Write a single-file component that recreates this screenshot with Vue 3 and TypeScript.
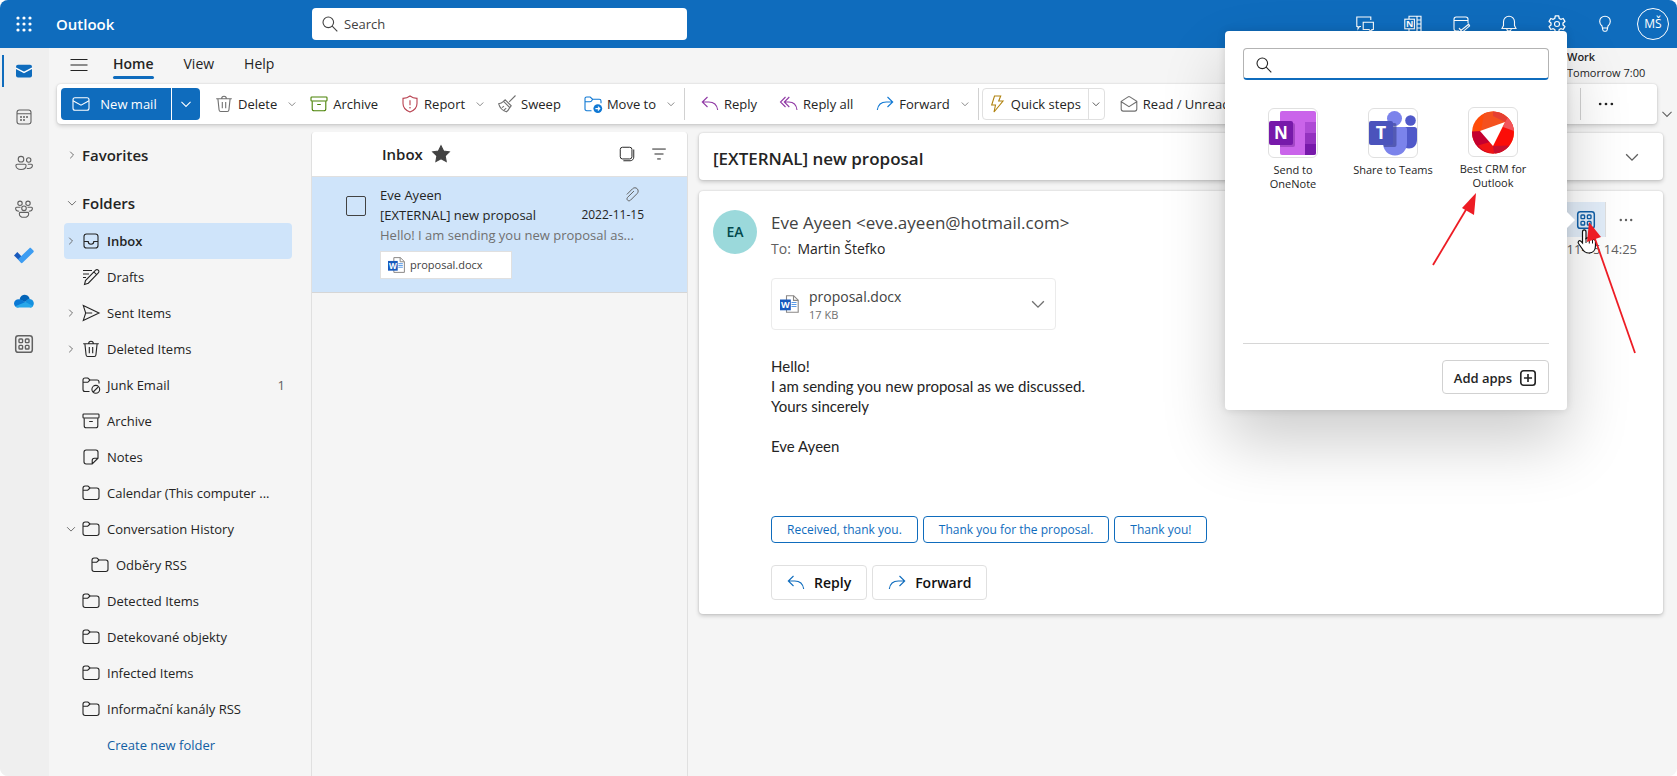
<script setup lang="ts">
import { h, ref } from 'vue'
import type { FunctionalComponent } from 'vue'

interface Folder {
  label: string
  icon: string
  chevron?: 'right' | 'down'
  count?: number
  selected?: boolean
  nested?: boolean
}

interface ToolbarAction {
  label: string
  icon: string
  tone: string
  menu?: boolean
}

const glyphs: Record<string, string> = {
  launcher:
    '<g fill="currentColor" stroke="none"><circle cx="4" cy="4" r="1.6"/><circle cx="10" cy="4" r="1.6"/><circle cx="16" cy="4" r="1.6"/><circle cx="4" cy="10" r="1.6"/><circle cx="10" cy="10" r="1.6"/><circle cx="16" cy="10" r="1.6"/><circle cx="4" cy="16" r="1.6"/><circle cx="10" cy="16" r="1.6"/><circle cx="16" cy="16" r="1.6"/></g>',
  search: '<circle cx="8.3" cy="8.3" r="5.3"/><path d="M12.2 12.2 17.3 17.3"/>',
  menu: '<path d="M1.5 4.5h17M1.5 10h17M1.5 15.5h17"/>',
  mail: '<rect x="2" y="3.8" width="16" height="12.4" rx="2"/><path d="m2 6.8 8 4.4 8-4.4"/>',
  mailFilled:
    '<rect x="2" y="3.8" width="16" height="12.6" rx="2" fill="currentColor" stroke="none"/><path d="m1.8 7.2 8.2 4.2 8.2-4.2" stroke="#fff" stroke-width="1.3"/>',
  calendar:
    '<rect x="3" y="3" width="14" height="14" rx="2.4"/><path d="M3 6.7h14"/><g fill="currentColor" stroke="none"><circle cx="7" cy="10" r="1"/><circle cx="10" cy="10" r="1"/><circle cx="13" cy="10" r="1"/><circle cx="7" cy="13" r="1"/><circle cx="10" cy="13" r="1"/></g>',
  people:
    '<circle cx="7" cy="6.2" r="2.8"/><circle cx="14.7" cy="7" r="2.2"/><path d="M3.2 11.3h7.6c.8 0 1.3.5 1.3 1.2 0 2.4-2 4-5.1 4s-5.1-1.6-5.1-4c0-.7.5-1.2 1.3-1.2ZM13.8 11.3h3.6c.6 0 1 .4 1 1 0 2-1.600 3.200-3.900 3.200-.6 0-1.200-.1-1.700-.3"/>',
  groups:
    '<circle cx="6" cy="4.300" r="2.200"/><circle cx="14" cy="4.300" r="2.200"/><circle cx="10" cy="9.300" r="2.300"/><path d="M6.500 8.300H2.600c-.6 0-1 .4-1 1 0 1.800 1.400 3 3.600 3M13.500 8.300h3.900c.6 0 1 .4 1 1 0 1.800-1.400 3-3.600 3M6.300 13.400h7.400c.6 0 1 .4 1 1 0 2.300-1.800 3.900-4.700 3.900s-4.700-1.600-4.700-3.900c0-.6.400-1 1-1Z"/>',
  todo:
    '<path d="m0 10.400 3.300-3.300 6.600 6.600-2.700 3.800z" fill="#185abd" stroke="none"/><path d="m4 14.200 11.400-11c.5-.5 1.200-.5 1.700 0l2.300 2.300c.5.500.5 1.200 0 1.700L8.500 17.800c-.5.5-1.100.5-1.600 0z" fill="#3d9df2" stroke="none"/>',
  cloud:
    '<path d="M5.500 8.500C6.400 5 9 3.600 11.500 3.900c2 .2 3.500 1.500 4.200 3.600L11 11z" fill="#0364b8" stroke="none"/><path d="M4 16.500c-2.400 0-4-1.700-4-4 0-2.500 2-4.300 4.700-4.300 1.300 0 2.400.4 3.500 1l5 3z" fill="#0a78d4" stroke="none"/><path d="m10 12 3-3c1-1.500 5.700-1.600 6.700 2.500.5 2.700-1 5-3.400 5z" fill="#1490df" stroke="none"/><path d="M1.300 15.200 11.500 10.900l7.400 4.100c-.7 1-1.600 1.500-2.800 1.500H4c-1.100 0-2-.5-2.700-1.300z" fill="#28a8ea" stroke="none"/>',
  apps:
    '<rect x="1.700" y="1.700" width="16.600" height="16.600" rx="2.600" stroke-width="1.500"/><g stroke-width="1.400"><rect x="5" y="5" width="3.600" height="3.600" rx=".8"/><rect x="11.400" y="5" width="3.600" height="3.600" rx=".8"/><rect x="5" y="11.400" width="3.600" height="3.600" rx=".8"/><rect x="11.400" y="11.400" width="3.600" height="3.600" rx=".8"/></g>',
  trash:
    '<path d="M2.200 4.700h15.600M7.700 4.500a2.300 2.300 0 0 1 4.600 0M3.900 4.900 5.100 16c.1.900.8 1.500 1.600 1.500h6.600c.8 0 1.500-.6 1.600-1.500L16.100 4.900M8.300 8v6.300M11.700 8v6.300"/>',
  archive:
    '<rect x="2" y="3" width="16" height="4" rx=".8"/><path d="M3.200 7.200v7.500c0 1.300.8 2.100 2.100 2.100h9.400c1.300 0 2.100-.8 2.100-2.100V7.200M8.200 10.500h3.600"/>',
  report:
    '<path d="M10 2c2.100 1.600 4.300 2.300 7 2.400v5.200c0 4-2.500 6.900-7 8.500-4.500-1.600-7-4.500-7-8.500V4.400c2.700-.1 4.900-.8 7-2.400ZM10 6.300v5"/><circle cx="10" cy="13.700" r=".8" fill="currentColor" stroke="none"/>',
  sweep:
    '<path d="m18.500 1.500-6.300 6.300M8.200 5.800l6 6-1.400 1.800-6.300-6.300zM6.500 7.300C5 8.800 3.500 9.500 1.700 9.800c1 3.800 3.700 6.700 7.700 8 1.600-1.200 2.600-2.600 3.400-4.200M5 13.600l2-1.500M7 16.200l2.200-2"/>',
  move:
    '<path d="M8.500 16.700H3.700c-1 0-1.700-.7-1.700-1.700V4.700C2 3.700 2.700 3 3.700 3h3.500l2.300 2.200h6.800c1 0 1.700.7 1.700 1.700v2.300M2 7.700h5c.7 0 1-.2 1.400-.6l1.300-1.800"/><circle cx="14.800" cy="14.600" r="4.400" fill="#0f78d4" stroke="none"/><path d="M12.400 14.600h4.400m-1.900-1.900 1.900 1.900-1.900 1.900" stroke="#fff"/>',
  reply: '<path d="M7.500 3 2.300 8l5.200 5M2.300 8h6.400c5 0 8.300 3 9 8"/>',
  replyAll: '<path d="M6.500 3 1.500 8l5 5M10.300 3l-5 5 5 5M5.300 8h4.500c4.600 0 7.600 2.900 8.200 8"/>',
  forward: '<path d="m12.500 3 5.200 5-5.200 5M17.700 8h-6.400c-5 0-8.300 3-9 8"/>',
  bolt: '<path d="M7.500 2h6.200l-2 5H16L7 18l1.500-7H4.700z"/>',
  openMail:
    '<path d="m2.200 7.400 6.900-4.500c.6-.4 1.200-.4 1.800 0l6.900 4.500v7.700c0 1.200-.8 2-2 2H4.200c-1.200 0-2-.8-2-2zM2.300 7.700l7.700 5 7.700-5"/>',
  inbox:
    '<rect x="3" y="3" width="14" height="14" rx="2.600"/><path d="M3 10.500h4.200c0 1.600 1.200 2.700 2.800 2.700s2.800-1.100 2.800-2.700H17"/>',
  drafts:
    '<path d="m3.500 17.500 1-4L14.600 3.200c.8-.8 2-.8 2.700 0 .8.700.8 1.900 0 2.700L7.300 16.200zM13 5l2.500 2.700M2 3.500h9M2 7h6M2 10.500h3"/>',
  send: '<path d="M2.300 2.600 18 10 2.300 17.400 4.700 10zM4.700 10h6.500"/>',
  junk:
    '<path d="M8.500 16.500H4c-1.200 0-2-.8-2-2v-9.500c0-1.200.8-2 2-2h2.800l2.200 2h7c1.200 0 2 .8 2 2v1.500M2 7.300h4.800L9 5"/><circle cx="14.800" cy="14.300" r="3.900"/><path d="m12.200 17 5.300-5.300"/>',
  note:
    '<path d="M5.200 3h9.600C16.100 3 17 3.900 17 5.200v6L11.200 17h-6C3.900 17 3 16.100 3 14.800V5.200C3 3.900 3.900 3 5.200 3ZM17 11.200h-3.600c-1.300 0-2.200.9-2.200 2.200V17"/>',
  folder:
    '<path d="M4.200 3h2.700l2.200 2h6.700c1.300 0 2.200.9 2.200 2.200v7.100c0 1.300-.9 2.200-2.200 2.200H4.200C2.900 16.500 2 15.600 2 14.300V5.200C2 3.900 2.900 3 4.200 3ZM2 7.200h4.700L9.100 5"/>',
  right: '<path d="m7 4.500 5.500 5.500L7 15.500" stroke-width="1.500"/>',
  down: '<path d="m3.500 7 6.500 6.500L16.500 7" stroke-width="1.500"/>',
  star: '<path d="m10 1.800 2.600 5.200 5.700.8-4.100 4 1 5.700-5.200-2.700-5.100 2.700 1-5.700-4.200-4 5.700-.8z" fill="currentColor"/>',
  select: '<rect x="2.500" y="2.500" width="13" height="13" rx="2.500"/><path d="M17.500 5v8.500c0 2.300-1.700 4-4 4H6"/>',
  filter: '<path d="M2.500 4.500h15M5 10h10M8 15.500h4"/>',
  clip: '<path d="m3.300 9.500 6.300-6.300c1.500-1.500 3.800-1.500 5.200 0s1.400 3.700 0 5.200l-7.500 7.500c-.9.900-2.300.9-3.200 0s-.9-2.300 0-3.200L11.200 5.700" transform="translate(1 1)"/>',
  more: '<g fill="currentColor" stroke="none"><circle cx="3.500" cy="10" r="1.500"/><circle cx="10" cy="10" r="1.500"/><circle cx="16.500" cy="10" r="1.500"/></g>',
  chat:
    '<path d="M6 12.500H4.500L3 14.800v-2.300H1.800V3h14v3M8.200 8.200h10.200v7.300h-1.600v2.300l-2.800-2.300H8.200z"/>',
  onenoteLine:
    '<path d="M6 5V2.200h12v15.600H6V15M14 2.200v15.600M14 6h4M14 10h4M14 14h4"/><rect x="1.800" y="5.200" width="9.600" height="9.600"/><text x="6.600" y="13.200" text-anchor="middle" font-size="9" font-weight="700" fill="currentColor" stroke="none">N</text>',
  dayCheck:
    '<path d="M8 17H5.200c-1.300 0-2.200-.9-2.200-2.200V5.200C3 3.900 3.900 3 5.200 3h9.600C16.100 3 17 3.900 17 5.200v4M3 6.500h14M8 14.200l2.200 2 7.500-6 .9 1.600-7.400 6.500z"/>',
  bell:
    '<path d="M10 2.200c3.100 0 5.500 2.400 5.500 5.500v3.800l1.500 3H3l1.500-3V7.700c0-3.100 2.400-5.500 5.500-5.500ZM7.800 14.800a2.200 2.200 0 0 0 4.400 0"/>',
  gear:
    '<circle cx="10" cy="10" r="2.500"/><path d="M8.300 1.900h3.400l.5 2.500 1.600.9 2.400-.8 1.700 2.900L16 9v2l1.900 1.600-1.700 2.900-2.400-.8-1.600.9-.5 2.500H8.300l-.5-2.500-1.600-.9-2.400.8-1.700-2.900L4 11V9L2.100 7.400l1.700-2.900 2.400.8 1.600-.9z" stroke-linejoin="round" stroke-width="1.300"/>',
  bulb:
    '<path d="M10 2.200c-3 0-5.300 2.300-5.300 5.200 0 1.900.9 3.300 2.300 4.600l.8 3.800c.1.900.7 1.500 1.500 1.500h1.400c.8 0 1.400-.6 1.500-1.500l.8-3.800c1.400-1.300 2.300-2.700 2.300-4.600 0-2.900-2.300-5.200-5.300-5.200ZM7.400 14h5.200"/>',
  plusBox: '<rect x="2" y="2" width="16" height="16" rx="3" stroke-width="1.800"/><path d="M10 5.500v9M5.500 10h9" stroke-width="1.800"/>',
  word:
    '<path d="M6.500 1.800h7.200l4.500 4.400v12H6.500z" fill="#fff" stroke="#8a8886"/><path d="M13.500 1.800v4.600h4.700" stroke="#8a8886"/><path d="M11.500 8.500h5M11.500 10.500h5M11.500 12.500h5" stroke="#5b9be6"/><rect x="0" y="5.500" width="10.800" height="10.800" fill="#185abd" stroke="none"/><text x="5.400" y="14" text-anchor="middle" font-size="9" font-weight="700" fill="#fff" stroke="none">W</text>',
}

const Icon: FunctionalComponent<{ name: string; size?: number }> = (props) =>
  h('svg', {
    viewBox: '0 0 20 20',
    width: props.size ?? 20,
    height: props.size ?? 20,
    fill: 'none',
    stroke: 'currentColor',
    'stroke-width': 1.1,
    'aria-hidden': 'true',
    innerHTML: glyphs[props.name],
  })
Icon.props = ['name', 'size']

const rail = [
  { name: 'Mail', icon: 'mailFilled', active: true },
  { name: 'Calendar', icon: 'calendar' },
  { name: 'People', icon: 'people' },
  { name: 'Groups', icon: 'groups' },
  { name: 'To Do', icon: 'todo' },
  { name: 'OneDrive', icon: 'cloud' },
  { name: 'Apps', icon: 'apps' },
]

const headerTools = [
  { name: 'Teams chat', icon: 'chat' },
  { name: 'OneNote feed', icon: 'onenoteLine' },
  { name: 'My Day', icon: 'dayCheck' },
  { name: 'Notifications', icon: 'bell' },
  { name: 'Settings', icon: 'gear' },
  { name: 'Tips', icon: 'bulb' },
]

const manage: ToolbarAction[] = [
  { label: 'Delete', icon: 'trash', tone: 'gray', menu: true },
  { label: 'Archive', icon: 'archive', tone: 'green' },
  { label: 'Report', icon: 'report', tone: 'red', menu: true },
  { label: 'Sweep', icon: 'sweep', tone: 'gray' },
  { label: 'Move to', icon: 'move', tone: 'blue', menu: true },
]

const respond: ToolbarAction[] = [
  { label: 'Reply', icon: 'reply', tone: 'purple' },
  { label: 'Reply all', icon: 'replyAll', tone: 'purple' },
  { label: 'Forward', icon: 'forward', tone: 'blue', menu: true },
]

const folders: Folder[] = [
  { label: 'Inbox', icon: 'inbox', chevron: 'right', selected: true },
  { label: 'Drafts', icon: 'drafts' },
  { label: 'Sent Items', icon: 'send', chevron: 'right' },
  { label: 'Deleted Items', icon: 'trash', chevron: 'right' },
  { label: 'Junk Email', icon: 'junk', count: 1 },
  { label: 'Archive', icon: 'archive' },
  { label: 'Notes', icon: 'note' },
  { label: 'Calendar (This computer ...', icon: 'folder' },
  { label: 'Conversation History', icon: 'folder', chevron: 'down' },
  { label: 'Odběry RSS', icon: 'folder', nested: true },
  { label: 'Detected Items', icon: 'folder' },
  { label: 'Detekované objekty', icon: 'folder' },
  { label: 'Infected Items', icon: 'folder' },
  { label: 'Informační kanály RSS', icon: 'folder' },
]

const quickReplies = ['Received, thank you.', 'Thank you for the proposal.', 'Thank you!']
const tabs = ['Home', 'View', 'Help']
const activeTab = ref('Home')
const query = ref('')
const appQuery = ref('')
const checked = ref(false)
</script>

<template>
  <div class="app">
    <header class="topbar">
      <button class="launcher" aria-label="App launcher"><Icon name="launcher" /></button>
      <span class="brand">Outlook</span>
      <label class="search">
        <Icon name="search" />
        <input v-model="query" type="text" placeholder="Search" aria-label="Search" />
      </label>
      <nav class="top-tools">
        <button v-for="tool in headerTools" :key="tool.name" :aria-label="tool.name">
          <Icon :name="tool.icon" />
        </button>
        <button class="me" aria-label="Account">MŠ</button>
      </nav>
    </header>

    <div class="body">
      <nav class="rail">
        <button v-for="item in rail" :key="item.name" :class="{ active: item.active }" :aria-label="item.name">
          <Icon :name="item.icon" />
        </button>
      </nav>

      <main class="workspace">
        <div class="tabs">
          <button class="hamburger" aria-label="Navigation pane"><Icon name="menu" /></button>
          <button
            v-for="tab in tabs"
            :key="tab"
            class="tab"
            :class="{ current: tab === activeTab }"
            @click="activeTab = tab"
          >
            {{ tab }}
          </button>
          <div class="agenda">
            <strong>Work</strong>
            <span>Tomorrow 7:00</span>
          </div>
        </div>

        <div class="ribbon-row">
          <div class="ribbon">
            <div class="new-mail">
              <button class="new-main"><Icon name="mail" />New mail</button>
              <button class="new-more" aria-label="New options"><Icon name="down" :size="14" /></button>
            </div>
            <button v-for="a in manage" :key="a.label" class="action" :class="{ menu: a.menu }">
              <Icon :name="a.icon" :class="a.tone" />{{ a.label }}
              <Icon v-if="a.menu" name="down" :size="10" class="caret" />
            </button>
            <span class="rule"></span>
            <button v-for="a in respond" :key="a.label" class="action" :class="{ menu: a.menu }">
              <Icon :name="a.icon" :class="a.tone" />{{ a.label }}
              <Icon v-if="a.menu" name="down" :size="10" class="caret" />
            </button>
            <span class="rule"></span>
            <div class="quick">
              <button class="quick-main"><Icon name="bolt" class="gold" />Quick steps</button>
              <button class="quick-more" aria-label="Quick steps options"><Icon name="down" :size="10" /></button>
            </div>
            <button class="action"><Icon name="openMail" class="gray" />Read / Unread</button>
            <div class="overflow">
              <span class="rule"></span>
              <button aria-label="More commands"><Icon name="more" :size="18" /></button>
            </div>
          </div>
          <button class="collapse" aria-label="Ribbon display options"><Icon name="down" :size="14" /></button>
        </div>

        <div class="panes">
          <aside class="folders">
            <h2><Icon name="right" :size="12" />Favorites</h2>
            <h2><Icon name="down" :size="12" />Folders</h2>
            <ul>
              <li v-for="f in folders" :key="f.label">
                <button class="folder" :class="{ selected: f.selected, nested: f.nested }">
                  <span class="twist"><Icon v-if="f.chevron" :name="f.chevron" :size="12" /></span>
                  <Icon :name="f.icon" />
                  <span class="folder-name">{{ f.label }}</span>
                  <span v-if="f.count" class="count">{{ f.count }}</span>
                </button>
              </li>
            </ul>
            <a href="#" class="create">Create new folder</a>
          </aside>

          <section class="list">
            <div class="list-head">
              <h3>Inbox</h3>
              <Icon name="star" class="star" />
              <button class="first" aria-label="Select"><Icon name="select" :size="18" /></button>
              <button aria-label="Filter"><Icon name="filter" :size="18" /></button>
            </div>
            <article class="item">
              <input v-model="checked" type="checkbox" aria-label="Select message" />
              <div class="summary">
                <div class="line"><span>Eve Ayeen</span><Icon name="clip" :size="18" class="clip" /></div>
                <div class="line"><span>[EXTERNAL] new proposal</span><time>2022-11-15</time></div>
                <p>Hello! I am sending you new proposal as...</p>
                <button class="chip"><Icon name="word" :size="18" />proposal.docx</button>
              </div>
            </article>
          </section>

          <section class="reading">
            <div class="card subject">
              <h1>[EXTERNAL] new proposal</h1>
              <button aria-label="Expand conversation"><Icon name="down" :size="18" /></button>
            </div>
            <article class="card message">
              <div class="avatar">EA</div>
              <div class="content">
                <div class="sender">
                  <div>
                    <div class="from">Eve Ayeen &lt;eve.ayeen@hotmail.com&gt;</div>
                    <div class="to">To: <b>Martin Štefko</b></div>
                  </div>
                  <div class="meta">
                    <div class="actions">
                      <button class="apps-button" aria-label="Apps"><Icon name="apps" /></button>
                      <button class="dots" aria-label="More actions"><Icon name="more" :size="16" /></button>
                    </div>
                    <time>2022-11-15 14:25</time>
                  </div>
                </div>
                <div class="attachment">
                  <Icon name="word" />
                  <div class="file"><span>proposal.docx</span><small>17 KB</small></div>
                  <button aria-label="Attachment actions"><Icon name="down" :size="18" /></button>
                </div>
                <div class="text">
                  <p>Hello!</p>
                  <p>I am sending you new proposal as we discussed.</p>
                  <p>Yours sincerely</p>
                  <p class="signature">Eve Ayeen</p>
                </div>
                <div class="suggestions">
                  <button v-for="q in quickReplies" :key="q">{{ q }}</button>
                </div>
                <div class="respond">
                  <button><Icon name="reply" />Reply</button>
                  <button><Icon name="forward" />Forward</button>
                </div>
              </div>
            </article>
          </section>
        </div>
      </main>
    </div>

    <div class="popup" role="dialog" aria-label="Apps">
      <label class="popup-search">
        <Icon name="search" />
        <input v-model="appQuery" type="text" aria-label="Search apps" />
      </label>
      <div class="tiles">
        <button class="tile">
          <span class="logo">
            <svg viewBox="0 0 48 48" width="48" height="48" aria-hidden="true">
              <rect x="11" y="2" width="36" height="44" rx="2" fill="#ca64ea" />
              <path d="M36 13h11v11H36z" fill="#ae4bd5" />
              <path d="M36 24h11v11H36z" fill="#9332bf" />
              <path d="M36 35h11v9a2 2 0 0 1-2 2h-9z" fill="#7719aa" />
              <path d="M11 14h13a2 2 0 0 1 2 2v20a2 2 0 0 1-2 2H11z" fill="#8b35ad" opacity=".6" />
              <rect x="0" y="12" width="24" height="24" rx="2" fill="#7719aa" />
              <text x="12" y="30" text-anchor="middle" font-size="17" font-weight="700" fill="#fff">N</text>
            </svg>
          </span>
          Send to OneNote
        </button>
        <button class="tile">
          <span class="logo">
            <svg viewBox="0 0 48 48" width="48" height="48" aria-hidden="true">
              <circle cx="41.500" cy="11.500" r="5.300" fill="#5059c9" />
              <path d="M34 18h11.500c1.500 0 2.500 1 2.500 2.500V31c0 5-3.500 8.500-8 8.500-3 0-5-1-6-3z" fill="#5059c9" />
              <circle cx="25.500" cy="9.500" r="7.500" fill="#7b83eb" />
              <path d="M15 18h21c1 0 2 1 2 2v14c0 7-5 12.500-12 12.500S14 41 14 34z" fill="#7b83eb" />
              <path d="M10 14h15.500a2 2 0 0 1 2 2v20a2 2 0 0 1-2 2H15z" fill="#393f8f" opacity=".6" />
              <rect x="0" y="12" width="24" height="24" rx="2" fill="#4b53bc" />
              <text x="12" y="30" text-anchor="middle" font-size="18" font-weight="700" fill="#fff">T</text>
            </svg>
          </span>
          Share to Teams
        </button>
        <button class="tile raised">
          <span class="logo">
            <svg viewBox="0 0 48 48" width="48" height="48" aria-hidden="true">
              <circle cx="24" cy="24.500" r="21" fill="#ff4b08" />
              <path d="M15 5.500a21 21 0 0 1 24 4.500l-3 5-24 8z" fill="#f4511e" />
              <path d="M24 3.500a21 21 0 0 1 14.500 6L36 14l-12-6z" fill="#e53f32" />
              <path d="M38.500 9.500A21 21 0 0 1 26 45.400L24 38l12-24z" fill="#fb0d08" />
              <path d="M38.500 9.500A21 21 0 0 1 45 23l-11-4 2-5z" fill="#f2555b" />
              <path d="M24 38 40.500 37.500A21 21 0 0 1 24 45.500z" fill="#c8102e" />
              <path d="M3 23.500 12 23 24 38v7.500A21 21 0 0 1 3 23.500z" fill="#c4002f" />
              <path d="M9 37.500 21 34l3 4 1 7.400a21 21 0 0 1-16-7.900z" fill="#f01414" />
              <path d="M11 23 36 14 24 38z" fill="#fff" />
            </svg>
          </span>
          Best CRM for Outlook
        </button>
      </div>
      <div class="popup-foot">
        <button>Add apps<Icon name="plusBox" :size="18" /></button>
      </div>
      <svg class="callouts" viewBox="0 0 460 340" width="460" height="340" aria-hidden="true">
        <path
          d="M357.500 201c0-2.800 3.500-2.800 3.500 0v6.500c1.500-1.200 3-.7 3.300.5 1.200-1 2.800-.5 3.200.8 1.300-.8 3 0 3 1.700v4c0 4.500-2.500 7.500-6.500 7.500-3.500 0-5.500-1.500-7-4.500l-3.500-5c-1.200-2 .8-3.500 2.300-2.300l1.700 1.800z"
          fill="#fff"
          stroke="#111"
          stroke-width="1.200"
        />
        <path d="M361 207v5M364.300 208v4.500M367.500 209v3.500" fill="none" stroke="#111" />
        <g stroke="#ed1c24" stroke-width="1.800" fill="#ed1c24">
          <path d="M208 234 242 177" />
          <path d="m251 162-14 15 12 7z" stroke="none" />
          <path d="M410 322 369 205" />
          <path d="m364 191-2 20 14-5z" stroke="none" />
        </g>
      </svg>
    </div>
  </div>
</template>

<style>
body {
  margin: 0;
  background: #fff;
}
</style>

<style scoped>
* {
  box-sizing: border-box;
}
.app {
  position: relative;
  display: flex;
  flex-direction: column;
  min-height: 100vh;
  overflow: hidden;
  border-radius: 8px;
  background: #f5f5f5;
  color: #242424;
  font-family: "Open Sans", "Noto Sans", sans-serif;
  font-size: 13px;
  line-height: 20px;
}
button,
input {
  margin: 0;
  padding: 0;
  border: 0;
  background: none;
  color: inherit;
  font: inherit;
}
input {
  outline: 0;
}
button {
  display: inline-flex;
  align-items: center;
  justify-content: center;
  white-space: nowrap;
}
svg {
  flex: none;
  display: block;
}
h1,
h2,
h3,
p,
ul {
  margin: 0;
  padding: 0;
  font-weight: 600;
}
p,
ul {
  font-weight: 400;
}
ul {
  list-style: none;
}

.topbar {
  display: flex;
  align-items: center;
  height: 48px;
  background: #0f6cbd;
  color: #fff;
}
.launcher {
  width: 48px;
  height: 48px;
}
.brand {
  width: 256px;
  padding-left: 8px;
  font-size: 15px;
  font-weight: 600;
}
.search {
  display: flex;
  align-items: center;
  gap: 4px;
  margin-left: 8px;
  width: 375px;
  height: 32px;
  padding: 0 8px;
  border-radius: 4px;
  background: #fff;
  color: #424242;
}
.search input,
.popup-search input {
  flex: 1;
  min-width: 0;
}
.search input::placeholder {
  color: #424242;
  opacity: 1;
}
.top-tools {
  display: flex;
  align-items: center;
  margin-left: auto;
  padding-right: 8px;
}
.top-tools button {
  width: 48px;
  height: 48px;
}
.top-tools .me {
  width: 32px;
  height: 32px;
  margin-left: 8px;
  border: 1px solid #fff;
  border-radius: 50%;
  font-size: 12px;
}

.body {
  flex: 1;
  display: flex;
}
.rail {
  width: 49px;
  flex: none;
  background: #efefef;
  color: #616161;
}
.rail button {
  display: flex;
  width: 48px;
  height: 46px;
  border: solid transparent;
  border-width: 7px 0;
}
.rail button.active {
  color: #0f6cbd;
  background: linear-gradient(#0f6cbd, #0f6cbd) 2px 0 / 2px 100% no-repeat padding-box;
}
.rail button:last-child {
  height: 40px;
}
.workspace {
  flex: 1;
  min-width: 0;
  display: flex;
  flex-direction: column;
}
.tabs {
  display: flex;
  height: 36px;
  padding-left: 18px;
}
.hamburger {
  width: 24px;
  padding-bottom: 2px;
}
.tab {
  position: relative;
  margin-left: 22px;
  padding-bottom: 4px;
  font-size: 14px;
}
.tab + .tab {
  margin-left: 30px;
}
.tab.current {
  font-weight: 600;
}
.tab.current::after {
  content: "";
  position: absolute;
  inset: auto 0 5px;
  height: 3px;
  border-radius: 2px;
  background: #0f6cbd;
}
.agenda {
  display: flex;
  flex-direction: column;
  margin-left: auto;
  padding-top: 1px;
  width: 110px;
  font-size: 11px;
  line-height: 16px;
}
.agenda strong {
  font-weight: 600;
}
.ribbon-row {
  display: flex;
  padding-left: 8px;
}
.ribbon {
  flex: 1;
  min-width: 0;
  display: flex;
  align-items: center;
  height: 40px;
  padding: 4px;
  border-radius: 4px;
  background: #fff;
  box-shadow: 0 0 2px rgba(0, 0, 0, 0.14), 0 2px 4px rgba(0, 0, 0, 0.16);
}
.new-mail {
  display: flex;
  gap: 1px;
  height: 32px;
  margin-right: 14px;
  color: #fff;
}
.new-mail button {
  background: #0f6cbd;
}
.new-main {
  width: 110px;
  gap: 9px;
  padding-right: 4px;
  border-radius: 4px 0 0 4px;
}
.new-more {
  width: 28px;
  border-radius: 0 4px 4px 0;
}
.action {
  gap: 4px;
  margin-right: 22px;
  flex: none;
}
.action.menu {
  margin-right: 12px;
}
.action .caret {
  margin-left: 6px;
  color: #616161;
}
.gray {
  color: #707070;
}
.green {
  color: #498205;
}
.red {
  color: #b8404f;
}
.blue {
  color: #0f78d4;
}
.purple {
  color: #9039a5;
}
.gold {
  color: #b0820e;
}
.rule {
  width: 1px;
  height: 32px;
  flex: none;
  background: #d1d1d1;
}
.action + .rule {
  margin-right: 15px;
  margin-left: -4px;
}
.quick {
  display: flex;
  height: 32px;
  margin: 0 14px 0 -12px;
  border: 1px solid #e0e0e0;
  border-radius: 4px;
  flex: none;
}
.quick-main {
  padding: 0 7px 0 4px;
  gap: 4px;
}
.quick-more {
  width: 16px;
  border-left: 1px solid #e0e0e0;
}
.overflow {
  display: flex;
  margin-left: auto;
  width: 73px;
}
.overflow button {
  width: 49px;
}
.collapse {
  width: 20px;
  align-items: flex-end;
  padding-bottom: 3px;
  color: #616161;
}

.panes {
  flex: 1;
  display: flex;
}
.folders {
  width: 262px;
  flex: none;
  padding: 7px 19px 0 15px;
}
.folders h2 {
  display: flex;
  align-items: center;
  gap: 4px;
  height: 48px;
  padding-left: 2px;
  font-size: 15px;
}
.folders h2 svg {
  color: #616161;
}
.folders ul {
  margin-top: -4px;
}
.folder {
  display: flex;
  justify-content: flex-start;
  width: 100%;
  height: 36px;
  padding-right: 7px;
  border-radius: 4px;
}
.folder.selected {
  background: #cfe4fa;
  font-weight: 600;
}
.folder.nested {
  padding-left: 9px;
}
.twist {
  width: 17px;
  padding-left: 1px;
  color: #616161;
}
.folder-name {
  margin-left: 6px;
}
.count {
  margin-left: auto;
  color: #616161;
}
.create {
  display: block;
  padding: 8px 0 12px 43px;
  color: #115ea3;
  text-decoration: none;
}

.list {
  width: 377px;
  flex: none;
  margin-top: 8px;
  border: solid #e0e0e0;
  border-width: 0 1px;
  border-radius: 4px 4px 0 0;
  overflow: hidden;
}
.list-head {
  display: flex;
  align-items: center;
  height: 45px;
  padding: 0 16px 0 70px;
  border-bottom: 1px solid #e0e0e0;
  background: #fff;
}
.list-head h3 {
  font-size: 15px;
}
.star {
  margin-left: 8px;
  color: #424242;
}
.list-head button {
  width: 24px;
  height: 24px;
  margin-left: 8px;
}
.list-head .first {
  margin-left: auto;
}
.item {
  display: flex;
  padding: 8px 43px 13px 34px;
  border-bottom: 1px solid #d6d6d6;
  background: #cfe4fa;
}
.item input {
  appearance: none;
  flex: none;
  width: 20px;
  height: 20px;
  margin: 11px 14px 0 0;
  border: 1px solid #424242;
  border-radius: 2px;
}
.summary {
  flex: 1;
  min-width: 0;
}
.line {
  display: flex;
  justify-content: space-between;
}
.line time {
  font-size: 12px;
}
.clip {
  margin-right: 3px;
  color: #616161;
}
.summary p {
  overflow: hidden;
  color: #707070;
  white-space: nowrap;
}
.chip {
  justify-content: flex-start;
  gap: 4px;
  width: 132px;
  height: 28px;
  margin-top: 6px;
  padding-left: 7px;
  border: 1px solid #e0e0e0;
  background: #fff;
  color: #424242;
  font-size: 11px;
}

.reading {
  flex: 1;
  min-width: 0;
  padding: 9px 14px 20px 11px;
}
.card {
  border-radius: 4px;
  background: #fff;
  box-shadow: 0 0 2px rgba(0, 0, 0, 0.16), 0 2px 4px rgba(0, 0, 0, 0.18);
}
.subject {
  display: flex;
  align-items: center;
  justify-content: space-between;
  height: 47px;
  margin-bottom: 11px;
  padding: 4px 22px 0 14px;
}
.subject h1 {
  font-size: 17px;
}
.subject button {
  padding-bottom: 4px;
  color: #616161;
}
.message {
  display: flex;
  gap: 14px;
  padding: 0 0 14px 14px;
}
.avatar {
  display: flex;
  align-items: center;
  justify-content: center;
  width: 44px;
  height: 44px;
  margin-top: 19px;
  border-radius: 50%;
  background: #9bd9db;
  color: #02494c;
  font-size: 14px;
  font-weight: 600;
}
.content {
  flex: 1;
  min-width: 0;
}
.sender {
  display: flex;
  justify-content: space-between;
  height: 87px;
}
.from {
  margin-top: 20px;
  color: #424242;
  font-size: 17px;
  line-height: 24px;
}
.to {
  margin-top: 4px;
  color: #616161;
  font-size: 14px;
}
.to b {
  margin-left: 3px;
  color: #242424;
  font-weight: 400;
}
.meta {
  display: flex;
  flex-direction: column;
  align-items: flex-end;
  padding: 11px 17px 0 0;
  color: #616161;
}
.actions {
  display: flex;
}
.apps-button {
  width: 40px;
  height: 35px;
  border-right: 1px solid #e0e0e0;
  background: #e3eefa;
  color: #0f5fa8;
}
.dots {
  width: 40px;
}
.meta time {
  margin: 2px 9px 0 0;
}
.attachment {
  display: flex;
  align-items: center;
  gap: 9px;
  width: 285px;
  height: 52px;
  padding: 0 8px;
  border: 1px solid #ebebeb;
  border-radius: 4px;
}
.file {
  flex: 1;
  padding-top: 3px;
  color: #424242;
  font-size: 14px;
  line-height: 18px;
}
.file span,
.file small {
  display: block;
}
.file small {
  color: #707070;
  font-size: 11px;
}
.attachment button {
  color: #707070;
}
.text {
  margin-top: 26px;
  font-family: Lato, "Open Sans", sans-serif;
  font-size: 15px;
}
.signature {
  padding-top: 20px;
}
.suggestions,
.respond {
  display: flex;
  gap: 5px;
}
.suggestions {
  margin-top: 60px;
}
.suggestions button {
  height: 27px;
  padding: 0 15px;
  border: 1px solid #0f6cbd;
  border-radius: 4px;
  color: #0f6cbd;
  font-size: 12px;
}
.respond {
  margin-top: 22px;
}
.respond button {
  gap: 8px;
  height: 35px;
  padding: 0 15px 0 14px;
  border: 1px solid #e0e0e0;
  border-radius: 4px;
  color: #111;
  font-size: 14px;
  font-weight: 600;
}
.respond svg {
  color: #0f6cbd;
}

.popup {
  position: absolute;
  top: 31px;
  right: 110px;
  width: 342px;
  padding: 17px 18px 16px;
  border-radius: 4px;
  background: #fff;
  box-shadow: 0 0 8px rgba(0, 0, 0, 0.12), 0 32px 64px rgba(0, 0, 0, 0.2);
}
.popup::after {
  content: "";
  position: absolute;
  top: 181px;
  left: 100%;
  border: solid transparent;
  border-width: 8px 0 8px 8px;
  border-left-color: #fff;
}
.popup-search {
  display: flex;
  align-items: center;
  height: 32px;
  padding: 3px 10px 0;
  border: 1px solid #b3b3b3;
  border-bottom: 2px solid #0f6cbd;
  border-radius: 4px;
}
.tiles {
  display: flex;
  height: 264px;
  padding-top: 28px;
  border-bottom: 1px solid #d6d6d6;
}
.tile {
  flex-direction: column;
  justify-content: flex-start;
  width: 100px;
  padding: 0 12px;
  font-size: 11px;
  line-height: 14px;
  white-space: normal;
}
.tile:nth-child(1) {
  padding: 0 20px;
}
.tile:nth-child(2) {
  padding: 0;
}
.raised {
  margin-top: -1px;
}
.logo {
  margin-bottom: 5px;
  border: 1px solid #e0e0e0;
  border-radius: 6px;
  overflow: hidden;
}
.popup-foot {
  display: flex;
  justify-content: flex-end;
  padding-top: 16px;
}
.popup-foot button {
  gap: 7px;
  height: 34px;
  padding: 2px 11px 0;
  border: 1px solid #d1d1d1;
  border-radius: 4px;
  font-weight: 600;
}
.callouts {
  position: absolute;
  top: 0;
  left: 0;
  z-index: 1;
  pointer-events: none;
}
</style>
